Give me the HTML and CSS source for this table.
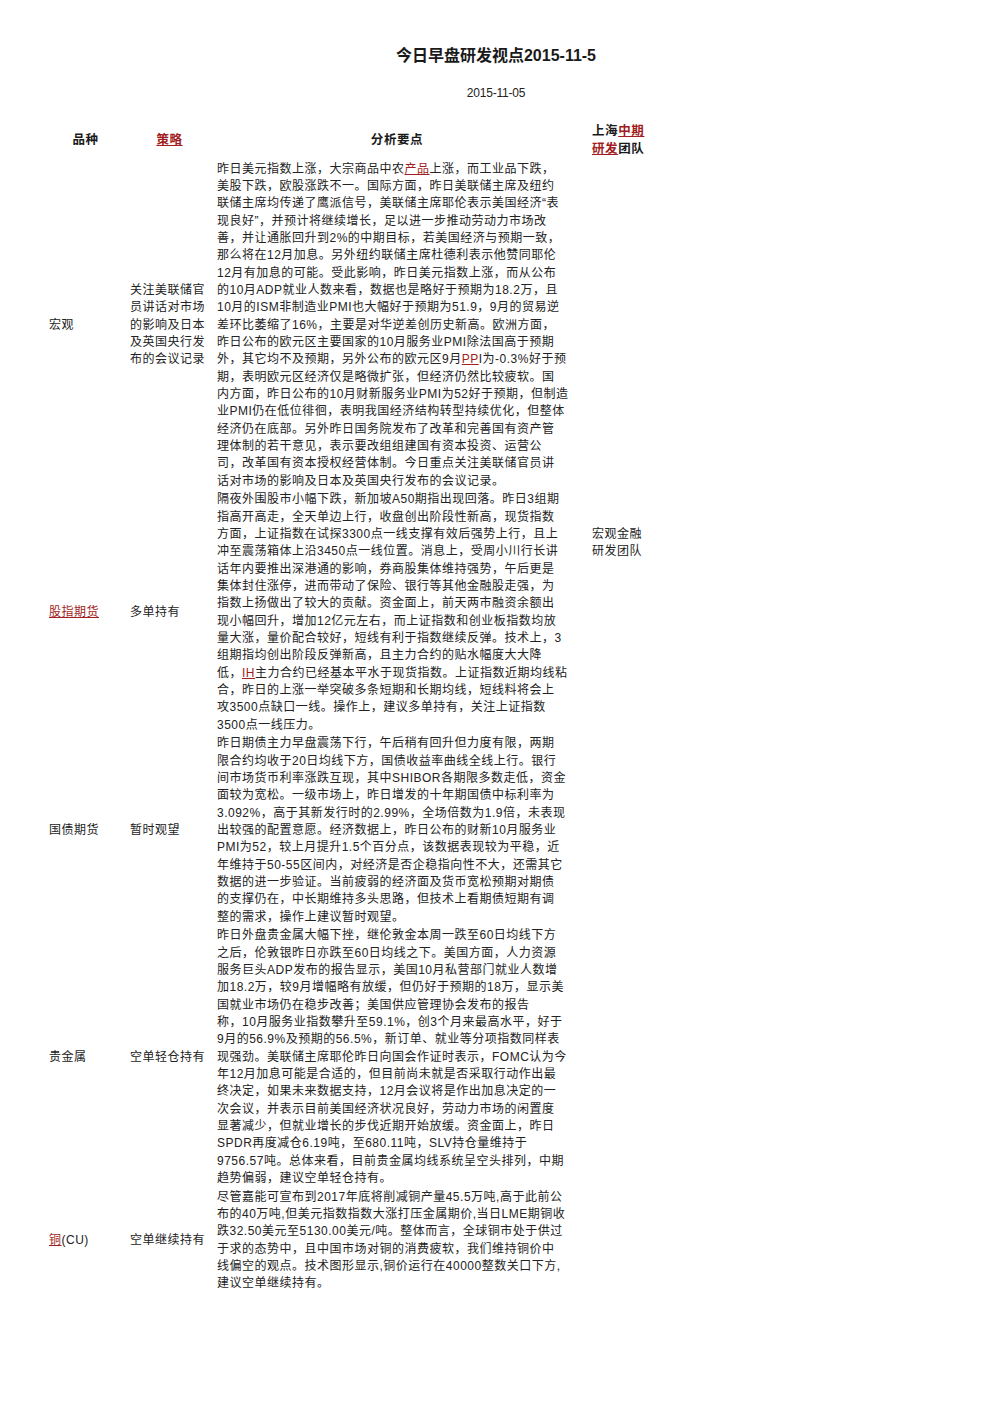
FILE: index.html
```html
<!DOCTYPE html>
<html lang="zh-CN">
<head>
<meta charset="utf-8">
<title>今日早盘研发视点2015-11-5</title>
<link rel="stylesheet" href="styles.css">
</head>
<body>
<h1 class="title">今日早盘研发视点2015-11-5</h1>
<div class="date">2015-11-05</div>
<table class="report">
  <colgroup>
    <col class="c1"><col class="c2"><col class="c3"><col class="c4">
  </colgroup>
  <thead>
    <tr>
      <th class="h-center">品种</th>
      <th class="h-center"><a href="#">策略</a></th>
      <th class="h-center">分析要点</th>
      <th class="h-left">上海<a href="#">中期</a><br><a href="#">研发</a>团队</th>
    </tr>
  </thead>
  <tbody>
    <tr>
      <td class="cat">宏观</td>
      <td class="strat">关注美联储官<br>员讲话对市场<br>的影响及日本<br>及英国央行发<br>布的会议记录</td>
      <td class="text">昨日美元指数上涨，大宗商品中农<a href="#">产品</a>上涨，而工业品下跌，<br>美股下跌，欧股涨跌不一。国际方面，昨日美联储主席及纽约<br>联储主席均传递了鹰派信号，美联储主席耶伦表示美国经济“表<br>现良好”，并预计将继续增长，足以进一步推动劳动力市场改<br>善，并让通胀回升到2%的中期目标，若美国经济与预期一致，<br>那么将在12月加息。另外纽约联储主席杜德利表示他赞同耶伦<br>12月有加息的可能。受此影响，昨日美元指数上涨，而从公布<br>的10月ADP就业人数来看，数据也是略好于预期为18.2万，且<br>10月的ISM非制造业PMI也大幅好于预期为51.9，9月的贸易逆<br>差环比萎缩了16%，主要是对华逆差创历史新高。欧洲方面，<br>昨日公布的欧元区主要国家的10月服务业PMI除法国高于预期<br>外，其它均不及预期，另外公布的欧元区9月<a href="#">PP</a>I为-0.3%好于预<br>期，表明欧元区经济仅是略微扩张，但经济仍然比较疲软。国<br>内方面，昨日公布的10月财新服务业PMI为52好于预期，但制造<br>业PMI仍在低位徘徊，表明我国经济结构转型持续优化，但整体<br>经济仍在底部。另外昨日国务院发布了改革和完善国有资产管<br>理体制的若干意见，表示要改组组建国有资本投资、运营公<br>司，改革国有资本授权经营体制。今日重点关注美联储官员讲<br>话对市场的影响及日本及英国央行发布的会议记录。</td>
      <td class="team" rowspan="3">宏观金融<br>研发团队</td>
    </tr>
    <tr>
      <td class="cat"><a href="#">股指期货</a></td>
      <td class="strat">多单持有</td>
      <td class="text">隔夜外围股市小幅下跌，新加坡A50期指出现回落。昨日3组期<br>指高开高走，全天单边上行，收盘创出阶段性新高，现货指数<br>方面，上证指数在试探3300点一线支撑有效后强势上行，且上<br>冲至震荡箱体上沿3450点一线位置。消息上，受周小川行长讲<br>话年内要推出深港通的影响，券商股集体维持强势，午后更是<br>集体封住涨停，进而带动了保险、银行等其他金融股走强，为<br>指数上扬做出了较大的贡献。资金面上，前天两市融资余额出<br>现小幅回升，增加12亿元左右，而上证指数和创业板指数均放<br>量大涨，量价配合较好，短线有利于指数继续反弹。技术上，3<br>组期指均创出阶段反弹新高，且主力合约的贴水幅度大大降<br>低，<a href="#">IH</a>主力合约已经基本平水于现货指数。上证指数近期均线粘<br>合，昨日的上涨一举突破多条短期和长期均线，短线料将会上<br>攻3500点缺口一线。操作上，建议多单持有，关注上证指数<br>3500点一线压力。</td>
    </tr>
    <tr>
      <td class="cat">国债期货</td>
      <td class="strat">暂时观望</td>
      <td class="text">昨日期债主力早盘震荡下行，午后稍有回升但力度有限，两期<br>限合约均收于20日均线下方，国债收益率曲线全线上行。银行<br>间市场货币利率涨跌互现，其中SHIBOR各期限多数走低，资金<br>面较为宽松。一级市场上，昨日增发的十年期国债中标利率为<br>3.092%，高于其新发行时的2.99%，全场倍数为1.9倍，未表现<br>出较强的配置意愿。经济数据上，昨日公布的财新10月服务业<br>PMI为52，较上月提升1.5个百分点，该数据表现较为平稳，近<br>年维持于50-55区间内，对经济是否企稳指向性不大，还需其它<br>数据的进一步验证。当前疲弱的经济面及货币宽松预期对期债<br>的支撑仍在，中长期维持多头思路，但技术上看期债短期有调<br>整的需求，操作上建议暂时观望。</td>
    </tr>
    <tr>
      <td class="cat">贵金属</td>
      <td class="strat">空单轻仓持有</td>
      <td class="text">昨日外盘贵金属大幅下挫，继伦敦金本周一跌至60日均线下方<br>之后，伦敦银昨日亦跌至60日均线之下。美国方面，人力资源<br>服务巨头ADP发布的报告显示，美国10月私营部门就业人数增<br>加18.2万，较9月增幅略有放缓，但仍好于预期的18万，显示美<br>国就业市场仍在稳步改善；美国供应管理协会发布的报告<br>称，10月服务业指数攀升至59.1%，创3个月来最高水平，好于<br>9月的56.9%及预期的56.5%，新订单、就业等分项指数同样表<br>现强劲。美联储主席耶伦昨日向国会作证时表示，FOMC认为今<br>年12月加息可能是合适的，但目前尚未就是否采取行动作出最<br>终决定，如果未来数据支持，12月会议将是作出加息决定的一<br>次会议，并表示目前美国经济状况良好，劳动力市场的闲置度<br>显著减少，但就业增长的步伐近期开始放缓。资金面上，昨日<br>SPDR再度减仓6.19吨，至680.11吨，SLV持仓量维持于<br>9756.57吨。总体来看，目前贵金属均线系统呈空头排列，中期<br>趋势偏弱，建议空单轻仓持有。</td>
      <td class="team" rowspan="2"></td>
    </tr>
    <tr>
      <td class="cat"><a href="#">铜</a>(CU)</td>
      <td class="strat">空单继续持有</td>
      <td class="text">尽管嘉能可宣布到2017年底将削减铜产量45.5万吨,高于此前公<br>布的40万吨,但美元指数指数大涨打压金属期价,当日LME期铜收<br>跌32.50美元至5130.00美元/吨。整体而言，全球铜市处于供过<br>于求的态势中，且中国市场对铜的消费疲软，我们维持铜价中<br>线偏空的观点。技术图形显示,铜价运行在40000整数关口下方,<br>建议空单继续持有。</td>
    </tr>
  </tbody>
</table>
</body>
</html>
```

FILE: styles.css
```css
html, body {
  margin: 0;
  padding: 0;
  background: #ffffff;
}

body {
  font-family: "Liberation Sans", "Noto Sans CJK SC", sans-serif;
  color: #222222;
  font-size: 12px;
}

a {
  color: #a11d21;
  text-decoration: underline;
}

.title {
  margin: 0;
  padding-top: 46px;
  font-size: 16px;
  line-height: 20px;
  font-weight: bold;
  text-align: center;
  color: #1a1a1a;
}

.date {
  margin-top: 19px;
  font-size: 12px;
  line-height: 16px;
  text-align: center;
  letter-spacing: -0.2px;
}

.report {
  margin-top: 22px;
  margin-left: 45px;
  border-collapse: collapse;
  border-spacing: 0;
  table-layout: fixed;
  width: 610px;
}

.c1 { width: 81px; }
.c2 { width: 87px; }
.c3 { width: 368px; }
.c4 { width: 74px; }

.report th {
  font-size: 12.5px;
  font-weight: bold;
  line-height: 17.5px;
  letter-spacing: 0.6px;
  padding: 0 4px 2px 4px;
  vertical-align: middle;
  color: #1a1a1a;
}

.h-center { text-align: center; }

.report th.h-left {
  text-align: left;
  padding-left: 11px;
}

.report td {
  font-size: 12px;
  line-height: 17.33px;
  letter-spacing: 0.5px;
  padding: 0.7px 4px;
  vertical-align: middle;
  text-align: left;
}

.report td.text {
  white-space: nowrap;
}

.report td.team {
  padding-left: 11px;
}
```
